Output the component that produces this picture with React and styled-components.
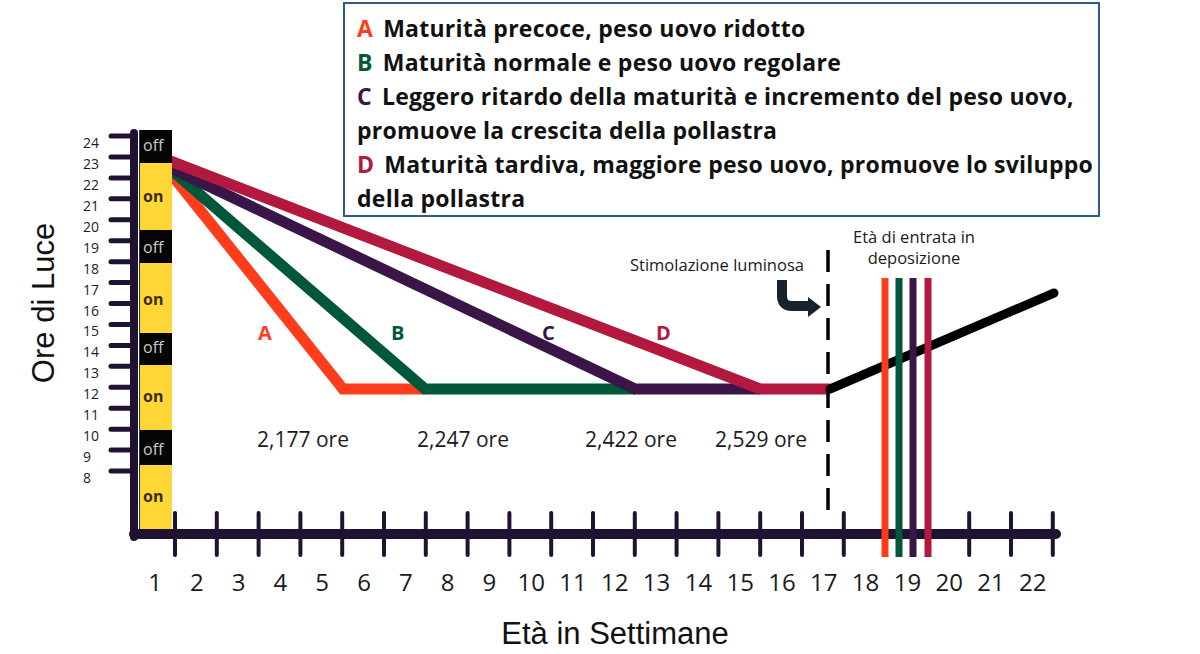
import styled, { createGlobalStyle } from "styled-components";

const GlobalStyle = createGlobalStyle`
html, body {
  margin: 0;
  padding: 0;
  background: #fff;
}
`;

const AXIS = "#1f1233";
const COLORS = {
  A: "#ff3c1c",
  B: "#00573a",
  C: "#3a1648",
  D: "#b3193f",
};

const X0 = 175;
const STEP = 41.8;
const yOf = (h) => 136 + (24 - h) * 20.94;

const lightBar = [
  { on: false, y1: 130, y2: 163, label: 146 },
  { on: true, y1: 163, y2: 230, label: 197 },
  { on: false, y1: 230, y2: 263, label: 248 },
  { on: true, y1: 263, y2: 333, label: 300 },
  { on: false, y1: 333, y2: 365, label: 348 },
  { on: true, y1: 365, y2: 430, label: 397 },
  { on: false, y1: 430, y2: 465, label: 450 },
  { on: true, y1: 465, y2: 530, label: 497 },
];

const curves = [
  { key: "A", points: "160,160 343,389 425,389", label: [258, 333] },
  { key: "B", points: "160,160 425,389 635,389", label: [391, 333] },
  { key: "C", points: "160,163 635,389 760,389", label: [542, 333] },
  { key: "D", points: "160,157 760,389 830,389", label: [656, 333] },
];

const hours = [
  { text: "2,177 ore", x: 257 },
  { text: "2,247 ore", x: 417 },
  { text: "2,422 ore", x: 585 },
  { text: "2,529 ore", x: 715 },
];

const layLines = [
  { key: "A", x: 885 },
  { key: "B", x: 899 },
  { key: "C", x: 913 },
  { key: "D", x: 928 },
];

const legend = [
  { key: "A", lines: ["Maturità precoce, peso uovo ridotto"] },
  { key: "B", lines: ["Maturità normale e peso uovo regolare"] },
  {
    key: "C",
    lines: [
      "Leggero ritardo della maturità e incremento del peso uovo,",
      "promuove la crescita della pollastra",
    ],
  },
  {
    key: "D",
    lines: [
      "Maturità tardiva, maggiore peso uovo, promuove lo sviluppo",
      "della pollastra",
    ],
  },
];

function Chart() {
  const hourTicks = [];
  for (let h = 24; h >= 8; h--) hourTicks.push(h);
  const weeks = [];
  for (let i = 0; i < 22; i++) weeks.push(i);

  return (
    <ChartSvg viewBox="0 0 1200 654" width="1200" height="654">
      {/* curves go under the light bar */}
      {curves.map((c) => (
        <polyline
          key={c.key}
          points={c.points}
          fill="none"
          stroke={COLORS[c.key]}
          strokeWidth="11"
          strokeLinejoin="miter"
        />
      ))}

      {lightBar.map((s, i) => (
        <g key={i}>
          <rect x="139" y={s.y1} width="33" height={s.y2 - s.y1} fill={s.on ? "#fed737" : "#050505"} />
          <BarLabel x="143" y={s.label + 5} $on={s.on}>
            {s.on ? "on" : "off"}
          </BarLabel>
        </g>
      ))}
      <line x1="139.5" y1="130" x2="139.5" y2="530" stroke="#2a3a3a" strokeWidth="1" />

      {/* y axis */}
      <line x1="134" y1="133" x2="134" y2="537" stroke={AXIS} strokeWidth="8" strokeLinecap="round" />
      {hourTicks.map((h) => (
        <g key={h}>
          <line x1="111" y1={yOf(h)} x2="134" y2={yOf(h)} stroke={AXIS} strokeWidth="5" strokeLinecap="round" />
          <TickText x="83" y={yOf(h) + 12}>{h}</TickText>
        </g>
      ))}

      {/* x axis */}
      <line x1="134" y1="534" x2="1056" y2="534" stroke={AXIS} strokeWidth="10" strokeLinecap="round" />
      {weeks.map((i) => (
        <g key={i}>
          <line x1={X0 + i * STEP} y1="513" x2={X0 + i * STEP} y2="555" stroke={AXIS} strokeWidth="4" strokeLinecap="round" />
          <WeekText x={X0 - 20 + i * STEP} y="591">{i + 1}</WeekText>
        </g>
      ))}

      {curves.map((c) => (
        <CurveLetter key={c.key} x={c.label[0]} y={c.label[1] + 7} fill={COLORS[c.key]}>
          {c.key}
        </CurveLetter>
      ))}

      {hours.map((h) => (
        <HourText key={h.text} x={h.x} y="447">{h.text}</HourText>
      ))}

      {/* stimolazione luminosa */}
      <line x1="828" y1="250" x2="828" y2="512" stroke="#000" strokeWidth="3.5" strokeDasharray="22 12" />
      <NoteText x="630" y="271">Stimolazione luminosa</NoteText>
      <path d="M782 280 V296 Q782 306 792 306 H810" fill="none" stroke="#17222f" strokeWidth="10" />
      <path d="M808 297 L821 307 L808 317 Z" fill="#17222f" />

      <line x1="830" y1="389" x2="1054" y2="293" stroke="#000" strokeWidth="9" strokeLinecap="round" />

      <NoteText x="914" y="243" textAnchor="middle">Età di entrata in</NoteText>
      <NoteText x="914" y="264" textAnchor="middle">deposizione</NoteText>
      {layLines.map((l) => (
        <line key={l.key} x1={l.x} y1="278" x2={l.x} y2="557" stroke={COLORS[l.key]} strokeWidth="7" />
      ))}

      <AxisTitle x="615" y="644" textAnchor="middle">Età in Settimane</AxisTitle>
      <AxisTitle x="54" y="303" textAnchor="middle" transform="rotate(-90 54 303)">Ore di Luce</AxisTitle>
    </ChartSvg>
  );
}

export default function App() {
  return (
    <>
      <GlobalStyle />
      <Figure>
        <Chart />
        <LegendBox>
          {legend.map((item) => (
            <LegendEntry key={item.key}>
              <Letter $color={COLORS[item.key]}>{item.key}</Letter>
              {item.lines.map((t, i) => (
                <span key={i}>
                  {i > 0 && <br />}
                  {t}
                </span>
              ))}
            </LegendEntry>
          ))}
        </LegendBox>
      </Figure>
    </>
  );
}

const Figure = styled.div`
position: relative;
width: 1200px;
height: 654px;
overflow: hidden;
background: #fff;
`;

const ChartSvg = styled.svg`
display: block;
`;

const LegendBox = styled.div`
position: absolute;
left: 343px;
top: 2px;
width: 737px;
height: 199px;
padding: 7px 4px 5px 12px;
border: 2px solid #2f5b86;
background: #fff;
font-family: "Open Sans", "Liberation Sans", sans-serif;
font-weight: 700;
font-size: 23px;
letter-spacing: 0.25px;
line-height: 34px;
white-space: nowrap;
color: #111;
`;

const LegendEntry = styled.div``;

const Letter = styled.span`
color: ${(p) => p.$color};
margin-right: 10px;
`;

const TickText = styled.text`
font-family: "Open Sans", sans-serif;
font-size: 14px;
fill: #222;
`;

const WeekText = styled.text`
font-family: "Open Sans", sans-serif;
font-size: 24px;
fill: #1a1a1a;
text-anchor: middle;
`;

const BarLabel = styled.text`
font-family: "Open Sans", sans-serif;
font-size: 16px;
font-weight: ${(p) => (p.$on ? 700 : 400)};
fill: ${(p) => (p.$on ? "#3b2c00" : "#c9c9c9")};
`;

const CurveLetter = styled.text`
font-family: "Open Sans", sans-serif;
font-size: 20px;
font-weight: 700;
`;

const HourText = styled.text`
font-family: "Open Sans", sans-serif;
font-size: 21px;
fill: #1a1a1a;
`;

const NoteText = styled.text`
font-family: "Open Sans", sans-serif;
font-size: 16.5px;
fill: #1a1a1a;
`;

const AxisTitle = styled.text`
font-family: "Liberation Sans", Arial, sans-serif;
font-size: 31px;
fill: #111;
`;
